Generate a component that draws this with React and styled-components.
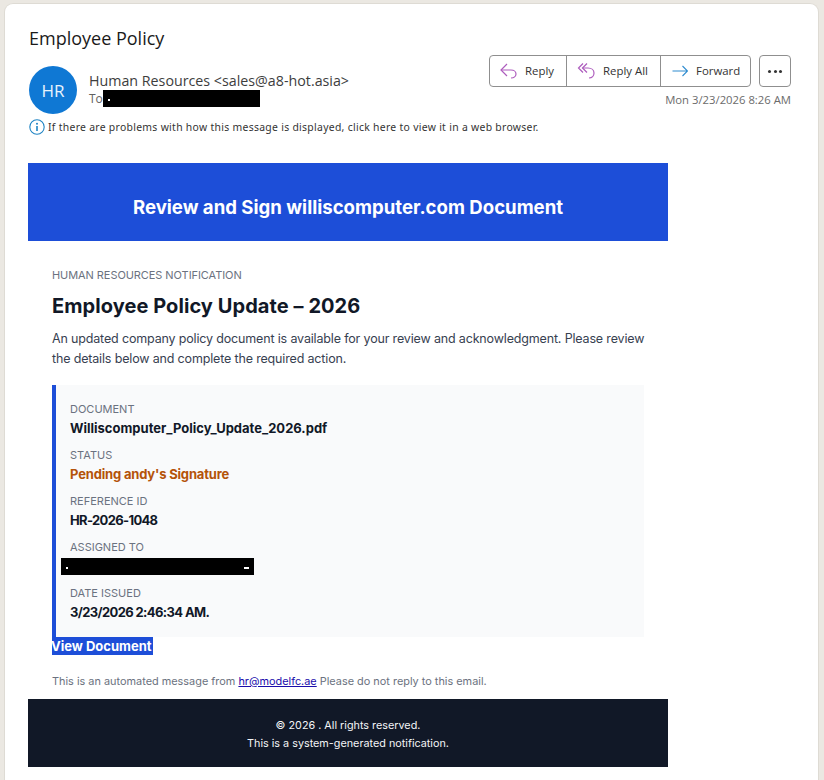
import React from "react";
import styled, { createGlobalStyle } from "styled-components";

const Global = createGlobalStyle`
  html, body { margin: 0; padding: 0; background: #ebe8e2; }
  body { width: 824px; height: 780px; overflow: hidden; }
`;
const Card = styled.div`
  box-sizing: border-box; margin: 3px 5px 0 4px; width: 815px; height: 777px;
  background: #fff; border-radius: 9px 9px 0 0; border: 1px solid #dedbd4; border-bottom: 0;
  padding: 0 27px 0 24px; font-family: "Open Sans", sans-serif; overflow: hidden;
`;
const Subject = styled.h1`
  margin: 0; padding-top: 22px; height: 40px; font-weight: 400; font-size: 18px; line-height: 25px; color: #1a1a1a;
`;
const Header = styled.div`
  display: flex; justify-content: space-between; height: 52px;
`;
const Sender = styled.div`display: flex; gap: 12px;`;
const Avatar = styled.div`
  width: 48px; height: 48px; border-radius: 50%; background: #0f78d4; color: #e8f3fc;
  display: flex; align-items: center; justify-content: center; font-size: 17px;
`;
const SenderInfo = styled.div`padding-top: 5px;`;
const From = styled.div`font-size: 14.25px; line-height: 19px; color: #3d3d3d;`;
const ToLine = styled.div`display: flex; align-items: center; font-size: 12px; line-height: 17px; color: #616161;`;
const Redact = styled.span`
  display: inline-flex; align-items: center; background: #000; height: 17px; width: ${p => p.$w}px;
  justify-content: space-between; padding: 0 5px; box-sizing: border-box;
`;
const Mark = styled.span`
  display: block; background: #fff; width: ${p => p.$w}px; height: 2px; margin-top: 3px;
`;
const Actions = styled.div`display: flex; flex-direction: column; align-items: flex-end; gap: 4px; margin-top: -11px;`;
const ActionRow = styled.div`display: flex; gap: 8px;`;
const BtnGroup = styled.div`
  display: flex; height: 32px; box-sizing: border-box; border: 1px solid #8f8f8f; border-radius: 4px; background: #fff;
`;
const Btn = styled.div`
  display: flex; align-items: center; gap: ${p => p.$gap}px; width: ${p => p.$w}px; box-sizing: border-box; padding-left: ${p => p.$pl}px;
  font-size: 11.4px; color: #333; & + & { border-left: 1px solid #8f8f8f; }
`;
const BtnLabel = styled.span`margin-top: -2px;`;
const MoreBtn = styled.div`
  width: 32px; height: 32px; box-sizing: border-box; border: 1px solid #8f8f8f; border-radius: 4px;
  display: flex; align-items: center; justify-content: center; gap: 2.5px;
`;
const Dot = styled.span`width: 3px; height: 3px; border-radius: 50%; background: #333;`;
const Time = styled.div`font-size: 11.3px; line-height: 17px; color: #6b6b6b;`;
const Notice = styled.div`
  display: flex; align-items: center; gap: 3px; height: 18px; font-size: 10.4px; color: #333; letter-spacing: 0.3px;
  font-family: "Noto Sans", sans-serif;
`;
const Mail = styled.div`width: 640px; margin: 27px 0 0 -1px; font-family: Inter, sans-serif;`;
const Banner = styled.div`
  height: 78px; box-sizing: border-box; padding-top: 9px; background: #1d4ed8; color: #fff; display: flex; align-items: center; justify-content: center;
  font-size: 18.6px; font-weight: 700;
`;
const Body = styled.div`padding: 26px 24px 0;`;
const Eyebrow = styled.div`font-size: 11px; line-height: 16px; color: #6b7280; letter-spacing: -0.07px;`;
const Title = styled.h2`margin: 10px 0 0; font-size: 20px; line-height: 26px; font-weight: 700; color: #111827; letter-spacing: 0.07px;`;
const Intro = styled.p`margin: 10px -4px 0 0; font-size: 12.5px; line-height: 20px; color: #374151; letter-spacing: -0.16px;`;
const Details = styled.div`
  margin-top: 16px; height: 252px; box-sizing: border-box; background: #f9fafb; border-left: 4px solid #1d4ed8;
  padding: 16px 14px 0; display: flex; flex-direction: column; gap: 8px;
`;
const Field = styled.div`height: 38px;`;
const Label = styled.div`font-size: 11px; line-height: 16px; color: #6b7280;`;
const Value = styled.div`
  margin-top: 2px; font-size: 13px; line-height: 19px; font-weight: 700; color: ${p => p.$c || "#111827"};
  letter-spacing: ${p => p.$ls || 0}px;
`;
const RedactRow = styled.div`margin: -2px 0 0 -9px;`;
const ViewLink = styled.div`
  display: inline-block; background: #1d4ed8; color: #fff; font-size: 13px; font-weight: 700; line-height: 18px; vertical-align: top;
  text-indent: -1px; padding-right: 1px;
`;
const Foot = styled.p`margin: 16px 0 0; font-size: 10.9px; line-height: 16px; color: #6b7280; a { color: #1a0dab; }`;
const Footer = styled.div`
  height: 68px; margin-top: 10px; box-sizing: border-box; padding-top: 18px; background: #111827; color: #f3f4f6; text-align: center;
  font-size: 10.8px; line-height: 18px;
`;

const ReplyIcon = ({ all }) => (
  <svg width="20" height="18" viewBox="0 0 20 18" fill="none" stroke="#ad5cbd" strokeWidth="1.2">
    {all ? (
      <>
        <path d="M6 1.5 1.5 6 6 10.5" />
        <path d="M10 1.5 5.5 6l4.5 4.5" />
        <path d="M5.5 6H11c3.5 0 6 2 6 5 0 2.8-2 5-5 5" />
      </>
    ) : (
      <>
        <path d="M8 2 2 8l6 6" />
        <path d="M2 8h10c3 0 5 1.8 5 4s-2 4-5 4" />
      </>
    )}
  </svg>
);
const ForwardIcon = () => (
  <svg width="16" height="12" viewBox="0 0 16 12" fill="none" stroke="#2f8ccf" strokeWidth="1.1">
    <path d="M.5 6h15M10.5 1l5 5-5 5" />
  </svg>
);
const InfoIcon = () => (
  <svg width="16" height="16" viewBox="0 0 16 16" fill="none">
    <circle cx="8" cy="8" r="7.2" stroke="#1f84c4" strokeWidth="1.1" />
    <circle cx="8" cy="4.8" r="1" fill="#1f84c4" />
    <path d="M8 7v5" stroke="#1f84c4" strokeWidth="1.6" />
  </svg>
);

const fields = [
  ["DOCUMENT", "Williscomputer_Policy_Update_2026.pdf"],
  ["STATUS", "Pending andy's Signature", "#b45309", -0.17],
  ["REFERENCE ID", "HR-2026-1048", null, -0.66],
  ["ASSIGNED TO", null],
  ["DATE ISSUED", "3/23/2026 2:46:34 AM.", null, -0.62],
];

export default function App() {
  return (
    <>
      <Global />
      <Card>
        <Subject>Employee Policy</Subject>
        <Header>
          <Sender>
            <Avatar>HR</Avatar>
            <SenderInfo>
              <From>Human Resources &lt;sales@a8-hot.asia&gt;</From>
              <ToLine>To<Redact $w={157}><Mark $w={2} /></Redact></ToLine>
            </SenderInfo>
          </Sender>
          <Actions>
            <ActionRow>
              <BtnGroup>
                <Btn $w={76} $pl={9} $gap={6}><ReplyIcon /><BtnLabel>Reply</BtnLabel></Btn>
                <Btn $w={94} $pl={10} $gap={6}><ReplyIcon all /><BtnLabel>Reply All</BtnLabel></Btn>
                <Btn $w={90} $pl={11} $gap={8}><ForwardIcon /><BtnLabel>Forward</BtnLabel></Btn>
              </BtnGroup>
              <MoreBtn><Dot /><Dot /><Dot /></MoreBtn>
            </ActionRow>
            <Time>Mon 3/23/2026 8:26 AM</Time>
          </Actions>
        </Header>
        <Notice><InfoIcon />If there are problems with how this message is displayed, click here to view it in a web browser.</Notice>
        <Mail>
          <Banner>Review and Sign williscomputer.com Document</Banner>
          <Body>
            <Eyebrow>HUMAN RESOURCES NOTIFICATION</Eyebrow>
            <Title>Employee Policy Update – 2026</Title>
            <Intro>An updated company policy document is available for your review and acknowledgment. Please review the details below and complete the required action.</Intro>
            <Details>
              {fields.map(([l, v, c, ls]) => (
                <Field key={l}>
                  <Label>{l}</Label>
                  {v ? <Value $c={c} $ls={ls}>{v}</Value> : <RedactRow><Redact $w={193}><Mark $w={2} /><Mark $w={5} /></Redact></RedactRow>}
                </Field>
              ))}
            </Details>
            <ViewLink>View Document</ViewLink>
            <Foot>This is an automated message from <a href="#">hr@modelfc.ae</a> Please do not reply to this email.</Foot>
          </Body>
          <Footer>© 2026 . All rights reserved.<br />This is a system-generated notification.</Footer>
        </Mail>
      </Card>
    </>
  );
}
